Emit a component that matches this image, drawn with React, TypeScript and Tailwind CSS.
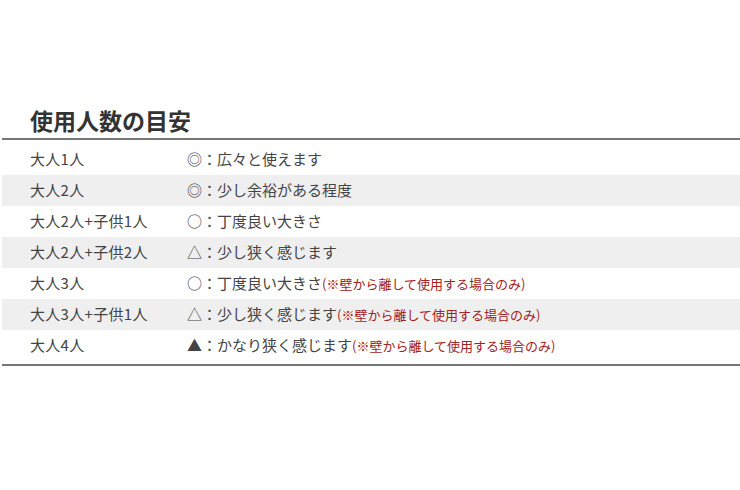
import React from "react";

type Row = { who: string; mark: string; text: string; note?: boolean };

const rows: Row[] = [
  { who: "大人1人", mark: "◎", text: "広々と使えます" },
  { who: "大人2人", mark: "◎", text: "少し余裕がある程度" },
  { who: "大人2人+子供1人", mark: "○", text: "丁度良い大きさ" },
  { who: "大人2人+子供2人", mark: "△", text: "少し狭く感じます" },
  { who: "大人3人", mark: "○", text: "丁度良い大きさ", note: true },
  { who: "大人3人+子供1人", mark: "△", text: "少し狭く感じます", note: true },
  { who: "大人4人", mark: "▲", text: "かなり狭く感じます", note: true },
];

export default function App() {
  return (
    <div
      className="w-[740px] h-[490px] bg-white text-[#444]"
      style={{ fontFamily: '"Noto Sans CJK JP", "Noto Sans", sans-serif' }}
    >
      <div className="ml-[2px] pt-[105px]">
        <h2 className="pl-[28px] pb-[3px] text-[23px] leading-[30px] font-bold text-[#333] border-b-2 border-[#777]">
          使用人数の目安
        </h2>
        <div className="pt-[4px] pb-[3px] border-b-2 border-[#777]">
          {rows.map((r, i) => (
            <div
              key={i}
              className={`flex items-center h-[31px] pl-[28px] text-[15px] ${
                i % 2 === 1 ? "bg-[#efefef]" : ""
              }`}
            >
              <div className="w-[157px] shrink-0 tracking-[0.02em]">{r.who}</div>
              <div className="flex items-center whitespace-nowrap">
                <span>{r.mark}：{r.text}</span>
                {r.note && (
                  <span className="text-[13px] text-[#a32222]">
                    (※壁から離して使用する場合のみ)
                  </span>
                )}
              </div>
            </div>
          ))}
        </div>
      </div>
    </div>
  );
}
